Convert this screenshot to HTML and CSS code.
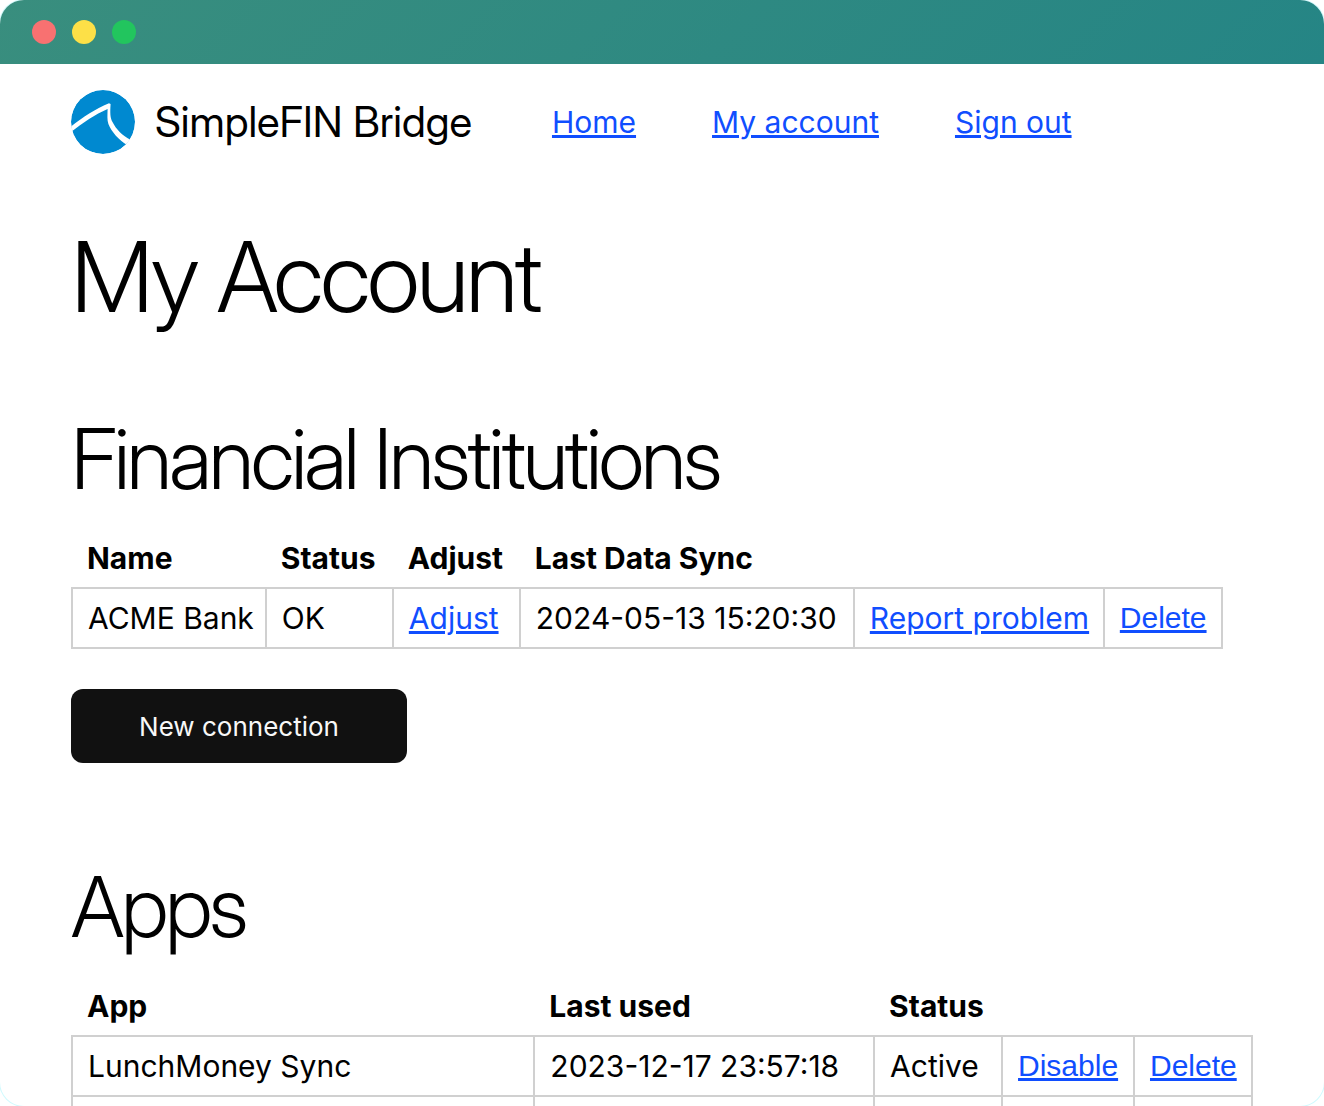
FILE: index.html
```html
<!DOCTYPE html>
<html lang="en">
<head>
<meta charset="utf-8">
<title>SimpleFIN Bridge</title>
<link rel="stylesheet" href="styles.css">
</head>
<body>
<div class="window">
  <div class="titlebar">
    <span class="dot dot-close"></span>
    <span class="dot dot-minimize"></span>
    <span class="dot dot-zoom"></span>
  </div>
  <div class="page">
    <header class="site-header">
      <div class="brand">
        <svg class="logo" viewBox="0 0 64 64" aria-hidden="true">
          <defs><clipPath id="disc"><circle cx="32" cy="32" r="32"/></clipPath></defs>
          <g clip-path="url(#disc)">
            <circle cx="32" cy="32" r="32" fill="#0089d0"/>
            <path d="M0 36.500C12 27 24 19 38 13.200L39.600 14C39 23 39.200 28 41.500 32C45 39 51 45.500 60 50L56 55C48 50 40.500 42 37.400 34C36 30 36.500 25 36.600 19C24 24.500 12 32.500 0 42Z" fill="#fff"/>
          </g>
        </svg>
        <span class="brand-name">SimpleFIN Bridge</span>
      </div>
      <nav class="nav">
        <a href="#">Home</a>
        <a href="#">My account</a>
        <a href="#">Sign out</a>
      </nav>
    </header>
    <main>
      <h1>My Account</h1>
      <section class="institutions">
        <h2>Financial Institutions</h2>
        <table>
          <thead>
            <tr><th class="col-name">Name</th><th class="col-status">Status</th><th class="col-status">Adjust</th><th class="col-sync">Last Data Sync</th><th class="col-report"></th><th class="col-delete"></th></tr>
          </thead>
          <tbody>
            <tr>
              <td>ACME Bank</td><td>OK</td><td><a href="#">Adjust</a></td><td>2024-05-13 15:20:30</td>
              <td><a href="#">Report problem</a></td><td><button class="link-button" type="button">Delete</button></td>
            </tr>
          </tbody>
        </table>
        <button class="primary" type="button">New connection</button>
      </section>
      <section class="apps">
        <h2>Apps</h2>
        <table>
          <thead>
            <tr><th class="col-app">App</th><th class="col-used">Last used</th><th class="col-active">Status</th><th class="col-disable"></th><th class="col-delete"></th></tr>
          </thead>
          <tbody>
            <tr>
              <td>LunchMoney Sync</td><td>2023-12-17 23:57:18</td><td>Active</td>
              <td><button class="link-button" type="button">Disable</button></td><td><button class="link-button" type="button">Delete</button></td>
            </tr>
            <tr><td></td><td></td><td></td><td></td><td></td></tr>
          </tbody>
        </table>
      </section>
    </main>
  </div>
</div>
</body>
</html>
```
FILE: styles.css
```css
* { box-sizing: border-box; }

body {
  margin: 0;
  background: #fff;
  color: #000;
  font: 400 30px/40px Inter, "Liberation Sans", sans-serif;
}

.window {
  height: 100vh;
  overflow: hidden;
  border-radius: 24px;
  box-shadow: 0 0 0 1px #cffafe;
}

.titlebar {
  display: flex;
  align-items: center;
  gap: 16px;
  height: 64px;
  padding: 0 32px;
  background: linear-gradient(135deg, #398e7e, #258585);
}

.dot { width: 24px; height: 24px; border-radius: 50%; }
.dot-close { background: #f87171; }
.dot-minimize { background: #fde047; }
.dot-zoom { background: #22c55e; }

.page { padding: 26px 71px 0; }

.site-header, .brand, .nav { display: flex; align-items: center; }
.site-header { gap: 80px; }
.brand { gap: 20px; }
.nav { gap: 76px; }
.logo { width: 64px; height: 64px; }
.brand-name, h1, h2 { font-family: "Inter Display", Inter, "Liberation Sans", sans-serif; font-weight: 300; }
.brand-name { font-size: 42px; font-weight: 400; line-height: 64px; white-space: nowrap; }

a, .link-button { color: #104eff; text-decoration: underline 3px; }

h1, h2 { margin: 0; letter-spacing: -3px; }
h1 { margin-top: 63px; font-size: 97px; line-height: 120px; }
h2 { font-size: 84px; line-height: 100px; }
.institutions { margin-top: 72px; }
.apps { margin-top: 94px; }

table { margin-top: 20px; border-collapse: collapse; white-space: nowrap; }
th { padding: 9px 11px 9px 15px; font-weight: 700; text-align: left; }
td { padding: 9px 11px 9px 15px; border: 2px solid #d0d0d0; }
.col-name { width: 193px; }
.col-status { width: 127px; }
.col-sync { width: 334px; }
.col-report { width: 250px; }
.col-delete { width: 118px; }
.col-app { width: 464px; }
.col-used { width: 340px; }
.col-active { width: 128px; }
.col-disable { width: 132px; }

.link-button {
  display: block;
  padding: 0;
  border: 0;
  background: none;
  font: 400 30px/40px "Liberation Sans", Arial, sans-serif;
}

.primary {
  display: block;
  width: 336px;
  height: 74px;
  margin-top: 40px;
  padding: 2px 0 0;
  border: 0;
  border-radius: 12px;
  background: #111;
  color: #f8f8f8;
  font: 400 26px/32px Inter, "Liberation Sans", sans-serif;
}
```
